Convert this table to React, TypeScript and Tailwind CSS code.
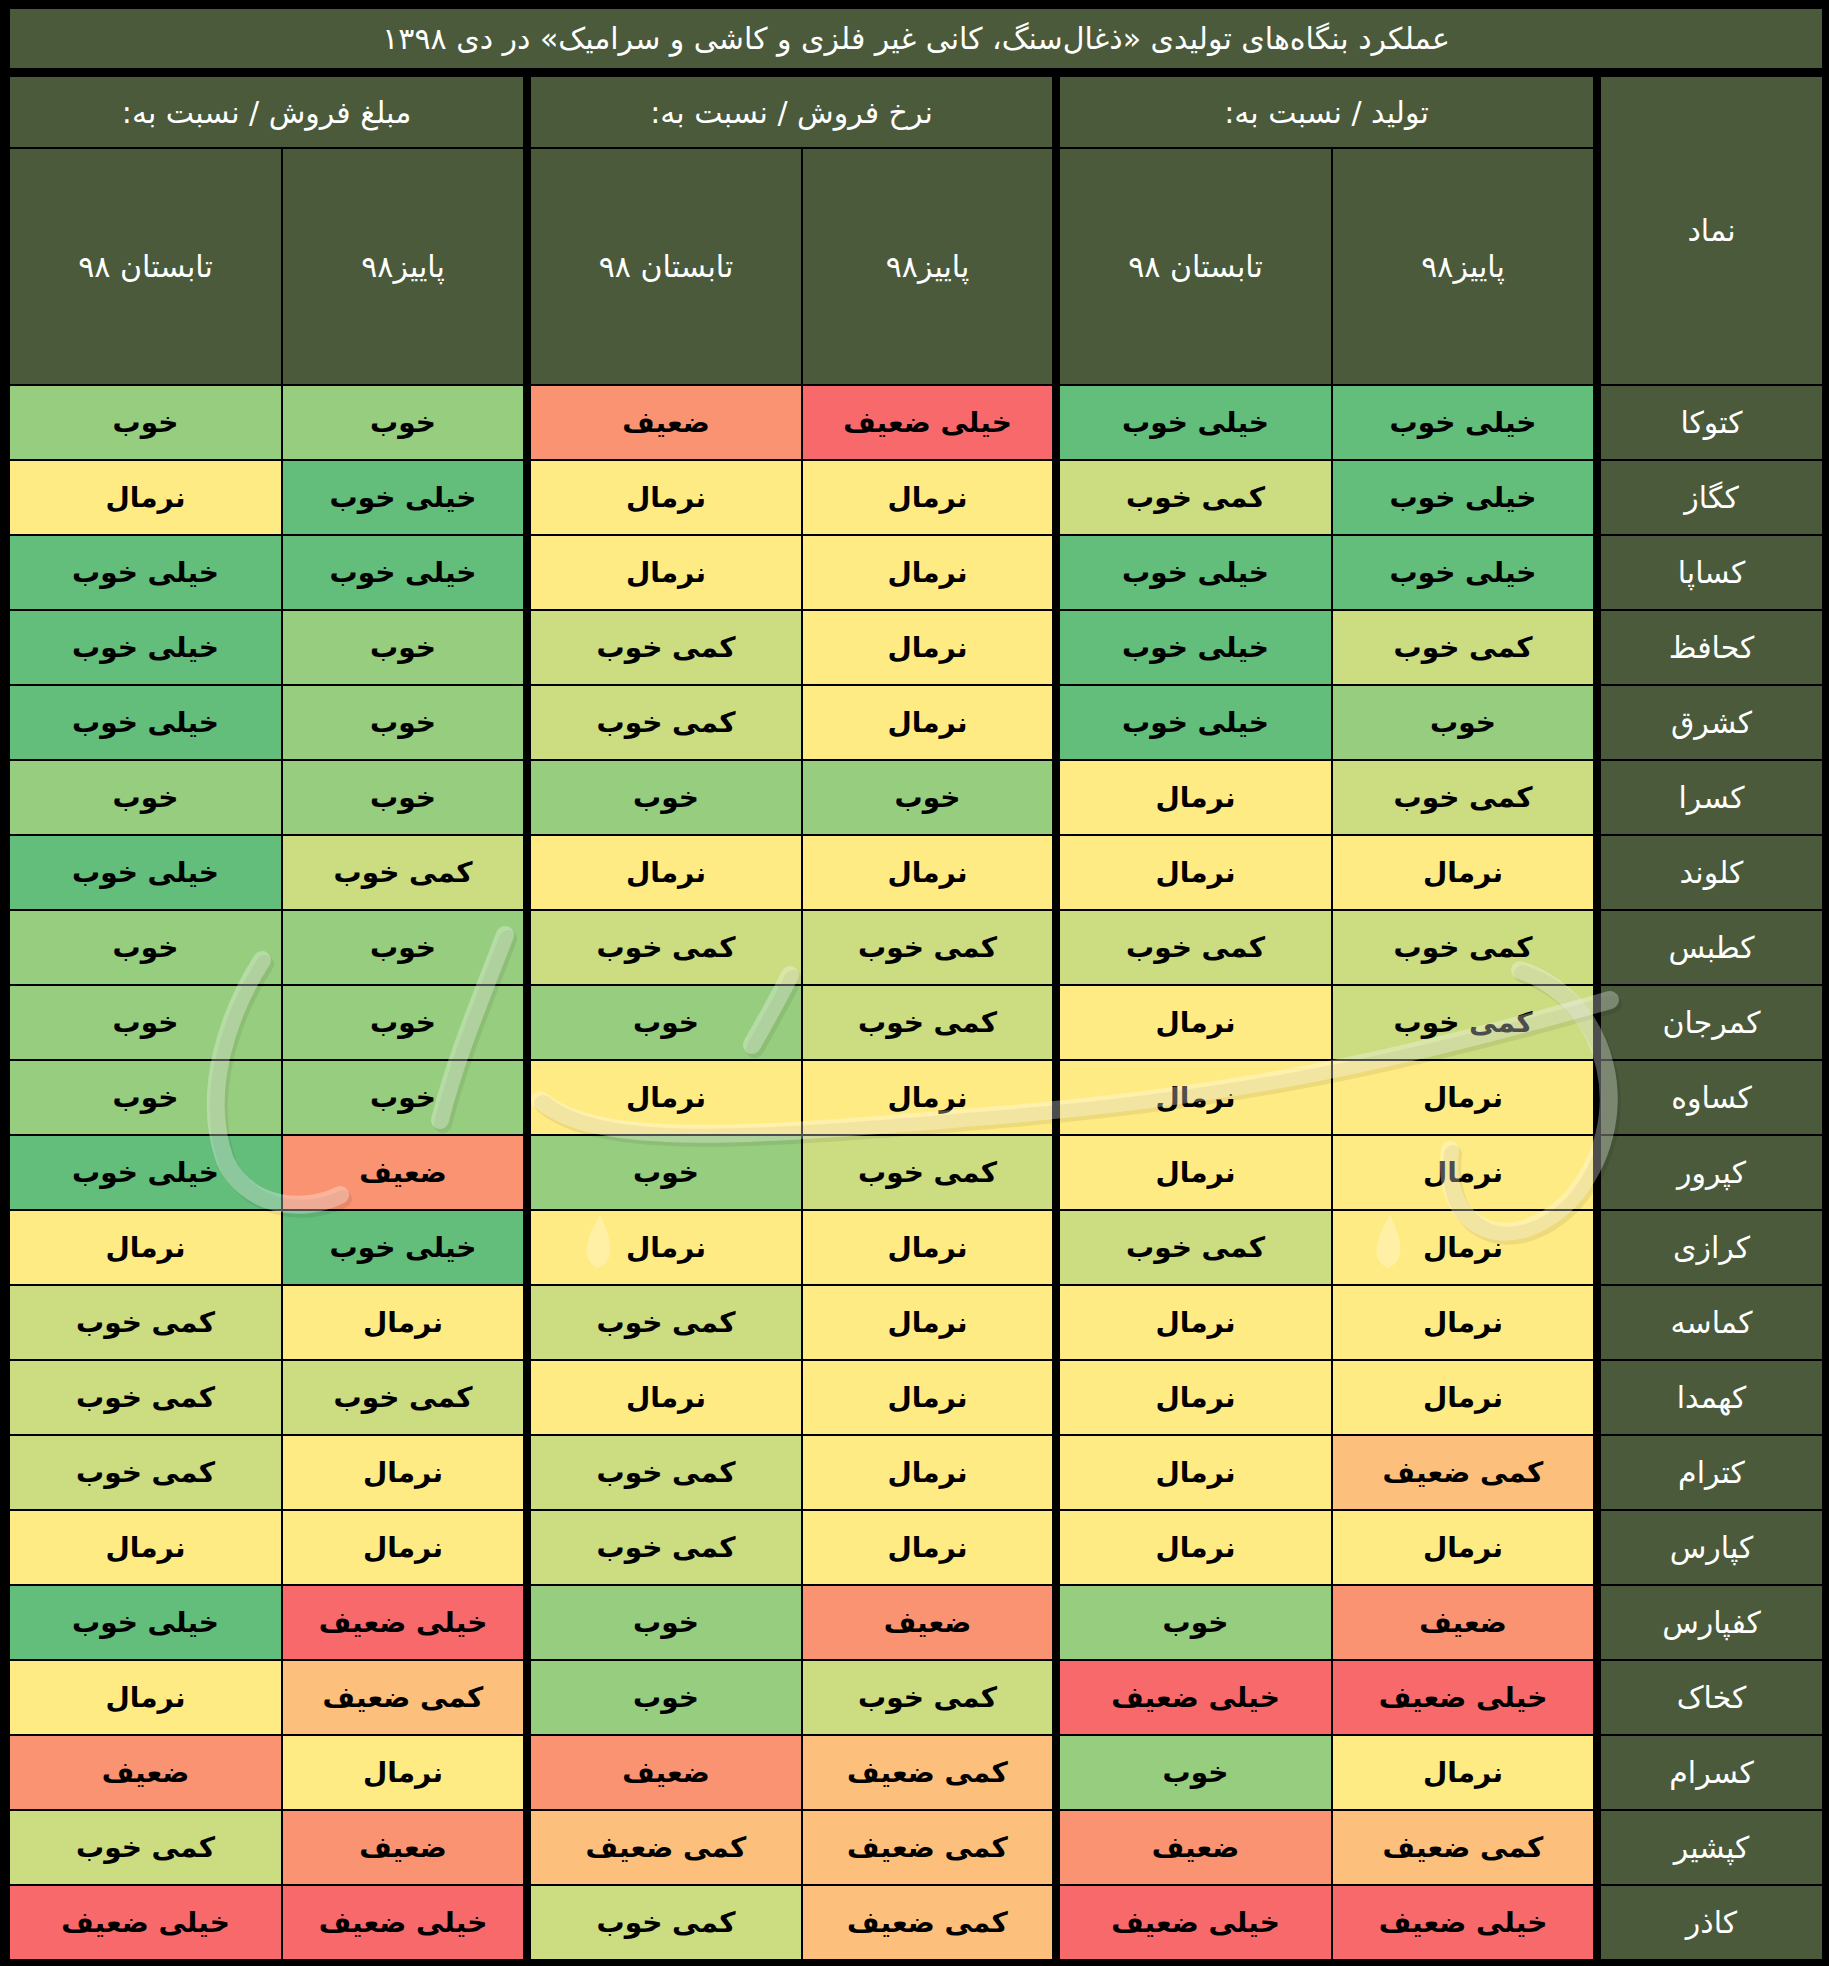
import React from 'react';

type Level = 'خیلی خوب' | 'خوب' | 'کمی خوب' | 'نرمال' | 'کمی ضعیف' | 'ضعیف' | 'خیلی ضعیف';

interface Row {
  symbol: string;
  values: Level[];
}

// Excel-like colour scale, green -> yellow -> red
const levelBg: Record<Level, string> = {
  'خیلی خوب': 'bg-[#63be7b]',
  'خوب': 'bg-[#97cd7e]',
  'کمی خوب': 'bg-[#cbdc81]',
  'نرمال': 'bg-[#ffeb84]',
  'کمی ضعیف': 'bg-[#fcc07c]',
  'ضعیف': 'bg-[#f99372]',
  'خیلی ضعیف': 'bg-[#f8696b]',
};

// values: [prod autumn, prod summer, rate autumn, rate summer, amount autumn, amount summer]
const rows: Row[] = [
  { symbol: 'کتوکا', values: ['خیلی خوب', 'خیلی خوب', 'خیلی ضعیف', 'ضعیف', 'خوب', 'خوب'] },
  { symbol: 'کگاز', values: ['خیلی خوب', 'کمی خوب', 'نرمال', 'نرمال', 'خیلی خوب', 'نرمال'] },
  { symbol: 'کساپا', values: ['خیلی خوب', 'خیلی خوب', 'نرمال', 'نرمال', 'خیلی خوب', 'خیلی خوب'] },
  { symbol: 'کحافظ', values: ['کمی خوب', 'خیلی خوب', 'نرمال', 'کمی خوب', 'خوب', 'خیلی خوب'] },
  { symbol: 'کشرق', values: ['خوب', 'خیلی خوب', 'نرمال', 'کمی خوب', 'خوب', 'خیلی خوب'] },
  { symbol: 'کسرا', values: ['کمی خوب', 'نرمال', 'خوب', 'خوب', 'خوب', 'خوب'] },
  { symbol: 'کلوند', values: ['نرمال', 'نرمال', 'نرمال', 'نرمال', 'کمی خوب', 'خیلی خوب'] },
  { symbol: 'کطبس', values: ['کمی خوب', 'کمی خوب', 'کمی خوب', 'کمی خوب', 'خوب', 'خوب'] },
  { symbol: 'کمرجان', values: ['کمی خوب', 'نرمال', 'کمی خوب', 'خوب', 'خوب', 'خوب'] },
  { symbol: 'کساوه', values: ['نرمال', 'نرمال', 'نرمال', 'نرمال', 'خوب', 'خوب'] },
  { symbol: 'کپرور', values: ['نرمال', 'نرمال', 'کمی خوب', 'خوب', 'ضعیف', 'خیلی خوب'] },
  { symbol: 'کرازی', values: ['نرمال', 'کمی خوب', 'نرمال', 'نرمال', 'خیلی خوب', 'نرمال'] },
  { symbol: 'کماسه', values: ['نرمال', 'نرمال', 'نرمال', 'کمی خوب', 'نرمال', 'کمی خوب'] },
  { symbol: 'کهمدا', values: ['نرمال', 'نرمال', 'نرمال', 'نرمال', 'کمی خوب', 'کمی خوب'] },
  { symbol: 'کترام', values: ['کمی ضعیف', 'نرمال', 'نرمال', 'کمی خوب', 'نرمال', 'کمی خوب'] },
  { symbol: 'کپارس', values: ['نرمال', 'نرمال', 'نرمال', 'کمی خوب', 'نرمال', 'نرمال'] },
  { symbol: 'کفپارس', values: ['ضعیف', 'خوب', 'ضعیف', 'خوب', 'خیلی ضعیف', 'خیلی خوب'] },
  { symbol: 'کخاک', values: ['خیلی ضعیف', 'خیلی ضعیف', 'کمی خوب', 'خوب', 'کمی ضعیف', 'نرمال'] },
  { symbol: 'کسرام', values: ['نرمال', 'خوب', 'کمی ضعیف', 'ضعیف', 'نرمال', 'ضعیف'] },
  { symbol: 'کپشیر', values: ['کمی ضعیف', 'ضعیف', 'کمی ضعیف', 'کمی ضعیف', 'ضعیف', 'کمی خوب'] },
  { symbol: 'کاذر', values: ['خیلی ضعیف', 'خیلی ضعیف', 'کمی ضعیف', 'کمی خوب', 'خیلی ضعیف', 'خیلی ضعیف'] },
];

const groups = [
  { title: 'تولید / نسبت به:', offset: 0, grid: 'grid-cols-[260px_271px]' },
  { title: 'نرخ فروش / نسبت به:', offset: 2, grid: 'grid-cols-[249px_270px]' },
  { title: 'مبلغ فروش / نسبت به:', offset: 4, grid: 'grid-cols-[240px_271px]' },
];

const headerBg = 'bg-[#4a5a3a]';
const headText = 'text-white text-[30px]';

const MetricGroup: React.FC<{ title: string; offset: number; grid: string }> = ({ title, offset, grid }) => (
  <div className={`grid ${grid} gap-[2px]`}>
    <div className={`col-span-2 h-[70px] ${headerBg} flex items-center justify-center ${headText}`}>{title}</div>
    <div className={`h-[235px] ${headerBg} flex items-center justify-center ${headText}`}>پاییز۹۸</div>
    <div className={`h-[235px] ${headerBg} flex items-center justify-center ${headText}`}>تابستان ۹۸</div>
    {rows.map((row) =>
      [row.values[offset], row.values[offset + 1]].map((value, i) => (
        <div
          key={row.symbol + i}
          className={`h-[73px] ${levelBg[value]} flex items-center justify-center text-black font-bold text-[28px]`}
        >
          {value}
        </div>
      ))
    )}
  </div>
);

// faint calligraphic watermark lying over the table
const Watermark: React.FC = () => (
  <svg className="absolute inset-0 pointer-events-none" width="1829" height="1966" viewBox="0 0 1829 1966" fill="none">
    <g strokeLinecap="round" strokeLinejoin="round">
      <g stroke="#000000" strokeOpacity="0.07" strokeWidth="18" transform="translate(3 4)">
        <path d="M540 1100 C 600 1150, 760 1135, 1000 1115 S 1400 1060, 1610 1000" />
        <path d="M262 960 C 230 1010, 200 1090, 225 1160 C 245 1205, 300 1215, 340 1195" />
        <path d="M505 935 C 480 1000, 455 1060, 440 1120" />
        <path d="M790 975 C 775 1005, 760 1030, 752 1045" />
        <path d="M1520 970 C 1610 1000, 1640 1120, 1570 1200 C 1510 1260, 1440 1230, 1450 1150" />
      </g>
      <g stroke="#ffffff" strokeOpacity="0.3" strokeWidth="18">
        <path d="M540 1100 C 600 1150, 760 1135, 1000 1115 S 1400 1060, 1610 1000" />
        <path d="M262 960 C 230 1010, 200 1090, 225 1160 C 245 1205, 300 1215, 340 1195" />
        <path d="M505 935 C 480 1000, 455 1060, 440 1120" />
        <path d="M790 975 C 775 1005, 760 1030, 752 1045" />
        <path d="M1520 970 C 1610 1000, 1640 1120, 1570 1200 C 1510 1260, 1440 1230, 1450 1150" />
      </g>
      <g fill="#ffffff" fillOpacity="0.28">
        <path d="M600 1215 C 585 1240, 580 1260, 598 1268 C 616 1260, 612 1240, 600 1215 Z" />
        <path d="M1390 1215 C 1375 1240, 1370 1260, 1388 1268 C 1406 1260, 1402 1240, 1390 1215 Z" />
      </g>
    </g>
  </svg>
);

const App: React.FC = () => {
  return (
    <div
      dir="rtl"
      className="relative w-[1829px] h-[1966px] bg-black pt-[9px] pl-[10px] pr-[7px] pb-[7px] font-['DejaVu_Sans',sans-serif]"
    >
      <div className={`h-[59px] ${headerBg} flex items-center justify-center ${headText}`}>
        عملکرد بنگاه‌های تولیدی «ذغال‌سنگ، کانی غیر فلزی و کاشی و سرامیک» در دی ۱۳۹۸
      </div>

      <div className="mt-[9px] flex gap-[8px]">
        <div className="w-[221px] flex flex-col gap-[2px]">
          <div className={`h-[307px] ${headerBg} flex items-center justify-center ${headText}`}>نماد</div>
          {rows.map((row) => (
            <div key={row.symbol} className={`h-[73px] ${headerBg} flex items-center justify-center ${headText}`}>
              {row.symbol}
            </div>
          ))}
        </div>
        {groups.map((g) => (
          <MetricGroup key={g.title} title={g.title} offset={g.offset} grid={g.grid} />
        ))}
      </div>

      <Watermark />
    </div>
  );
};

export default App;
